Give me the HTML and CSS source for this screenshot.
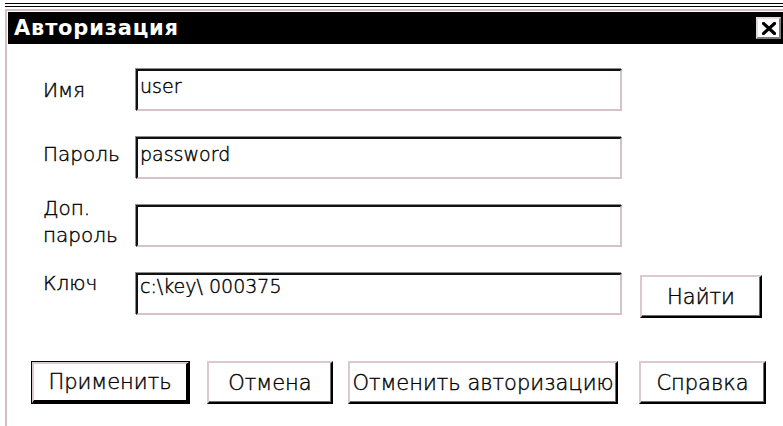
FILE: index.html
```html
<!DOCTYPE html>
<html lang="ru">
<head>
<meta charset="utf-8">
<title>Авторизация</title>
<link rel="stylesheet" href="styles.css">
</head>
<body>
<div class="screen">
  <div class="rule"></div>
  <div class="window">
    <div class="titlebar">
      <span class="title">Авторизация</span>
      <button class="close" type="button" aria-label="Закрыть">
        <svg width="14" height="13" viewBox="0 0 14 13" aria-hidden="true">
          <path d="M1.5 1.5 L12.5 11.5 M12.5 1.5 L1.5 11.5" stroke="#000" stroke-width="3.2" stroke-linecap="square"/>
        </svg>
      </button>
    </div>
    <div class="content">
      <form class="form">
        <label class="label label-name" for="login">Имя</label>
        <input class="field" id="login" type="text" value="user">

        <label class="label label-pass" for="pass">Пароль</label>
        <input class="field" id="pass" type="text" value="password">

        <label class="label label-extra" for="pass2">Доп.<br>пароль</label>
        <input class="field" id="pass2" type="text" value="">

        <label class="label label-key" for="keyfile">Ключ</label>
        <input class="field field-key" id="keyfile" type="text" value="c:\key\ 000375">
        <button class="btn btn-find" type="button">Найти</button>
      </form>
      <div class="actions">
        <button class="btn btn-default btn-apply" type="button">Применить</button>
        <button class="btn btn-cancel" type="button">Отмена</button>
        <button class="btn btn-logout" type="button">Отменить авторизацию</button>
        <button class="btn btn-help" type="button">Справка</button>
      </div>
    </div>
  </div>
</div>
</body>
</html>
```
FILE: styles.css
```css
* {
  box-sizing: border-box;
}

html, body {
  margin: 0;
  background: #fff;
  height: 100%;
  overflow: hidden;
}

body {
  font-family: "DejaVu Sans", sans-serif;
  font-weight: 200;
  color: #000;
}

.screen {
  padding: 3px 0 0 5px;
  height: 100%;
}

/* double line above the dialog */
.rule {
  height: 4px;
  border-top: 1px solid #000;
  border-bottom: 1px solid #000;
}

.window {
  margin-top: 2px;
  border-top: 2px solid #d6bec8;
  border-left: 2px solid #d6bec8;
  padding: 1px 0 0 1px;
  height: calc(100% - 6px);
}

.titlebar {
  height: 32px;
  background: #000;
  display: flex;
  align-items: center;
  justify-content: space-between;
  padding: 0 2px 0 6px;
}

.title {
  color: #fff;
  font-weight: bold;
  font-size: 21px;
  letter-spacing: 0.8px;
  line-height: 1;
}

.close {
  width: 25px;
  height: 22px;
  padding: 0;
  background: #fff;
  border: 2px solid;
  border-color: #e8d6de #7c7c7c #7c7c7c #e8d6de;
  display: flex;
  align-items: center;
  justify-content: center;
}

.close svg {
  display: block;
}

.content {
  padding-top: 25px;
}

.form {
  margin: 0 0 0 35px;
  display: grid;
  grid-template-columns: 93px 486px 140px;
  grid-auto-rows: 42px;
  row-gap: 26px;
}

/* thin glyphs, darkened slightly so strokes read as solid black */
.label,
.field,
.btn {
  -webkit-text-stroke: 0.4px #000;
}

.label {
  grid-column: 1;
  font-size: 20px;
  line-height: 23px;
  align-self: start;
}

.label-name { padding-top: 10px; }
.label-pass { padding-top: 6px; }
.label-extra { margin-top: -10px; line-height: 27px; }
.label-key { margin-top: -1px; }

.field {
  grid-column: 2;
  height: 42px;
  margin: 0;
  font-family: inherit;
  font-weight: inherit;
  font-size: 19px;
  color: #000;
  background: #fff;
  padding: 4px 2px 12px;
  border: 2px solid;
  border-color: #111 #d8c2ca #d8c2ca #111;
  box-shadow: -1px -1px 0 #8c8c8c;
  outline: none;
}

.field-key {
  padding-top: 0;
  padding-bottom: 16px;
}

.btn {
  height: 43px;
  padding: 0;
  font-family: inherit;
  font-weight: inherit;
  font-size: 21px;
  color: #000;
  background: #fff;
  border: 2px solid;
  border-color: #dcc8d0 #000 #000 #dcc8d0;
  box-shadow: inset -1px -1px 0 #6e6e6e;
  white-space: nowrap;
  overflow: visible;
}

.btn-find {
  grid-column: 3;
  width: 122px;
  margin: 2px 0 0 18px;
}

.actions {
  margin-top: 46px;
  padding-left: 24px;
  display: flex;
  align-items: center;
}

.btn-default {
  height: 41px;
  border-width: 2px 3px 3px 2px;
  box-shadow: 0 0 0 1px #000;
}

.btn-apply { width: 157px; }
.btn-cancel { width: 126px; margin-left: 18px; }
.btn-logout { width: 270px; margin-left: 15px; }
.btn-help { width: 127px; margin-left: 21px; }
```
